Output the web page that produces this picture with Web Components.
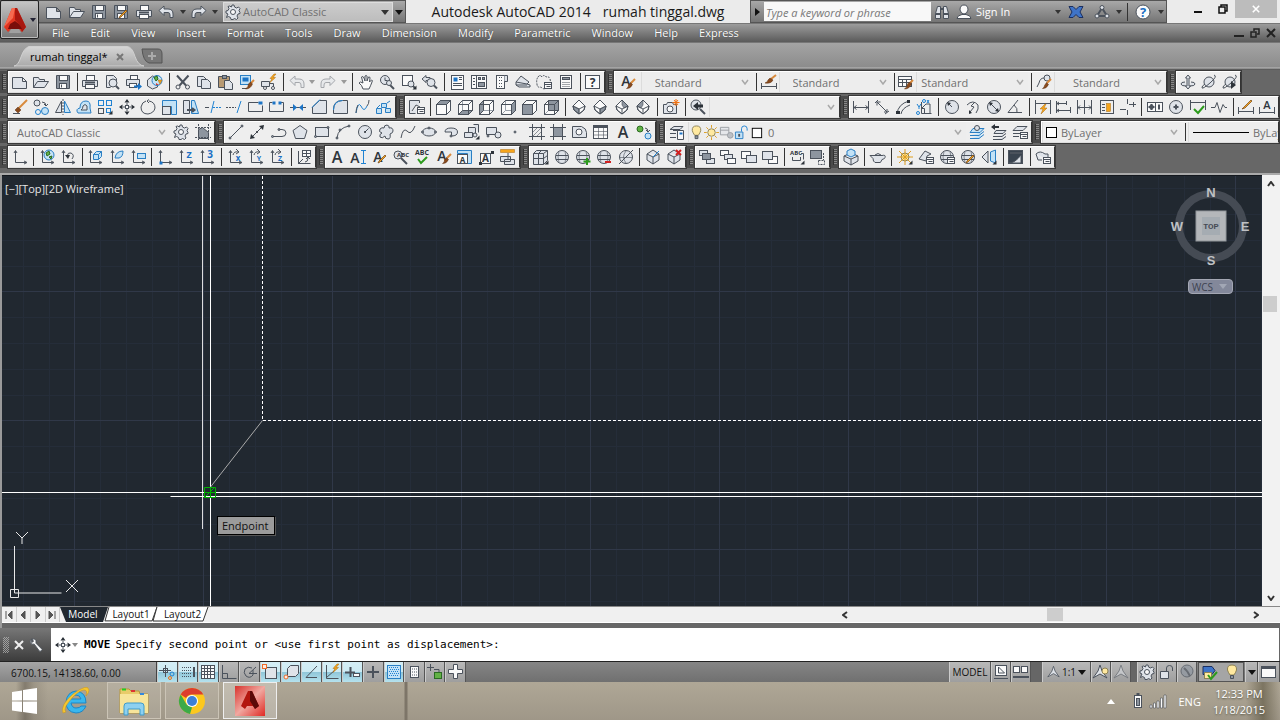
<!DOCTYPE html>
<html lang="en">
<head>
<meta charset="utf-8">
<meta name="viewport" content="width=device-width, initial-scale=1">
<title>Autodesk AutoCAD 2014 - rumah tinggal.dwg</title>
<style>
  html, body { margin: 0; height: 100%; }
  body { font-family: "Open Sans", "Noto Sans", sans-serif; font-size: 11px; overflow: hidden; background: #676767; }
</style>
</head>
<body>
<cad-app></cad-app>
<script>
/* ---------- icon artwork, drawn on a 16 x 16 grid ---------- */
const p = (d, c = '') => `<path class="${c}" d="${d}"/>`;
const ci = (x, y, r, c = '') => `<circle class="${c}" cx="${x}" cy="${y}" r="${r}"/>`;
const t = (s, x, y, size, c = '') => `<text class="t ${c}" x="${x}" y="${y}" font-size="${size}">${s}</text>`;
/* whole coordinates move to the pixel centre so that 1px outlines stay crisp */
const half = v => Number.isInteger(v) ? v + .5 : v;
const re = (x, y, w, h, c = '') => `<rect class="${c}" x="${half(x)}" y="${half(y)}" width="${Math.floor(w)}" height="${Math.floor(h)}"/>`;

const cube = shaded => {
  const faces = {
    back: 'M4.5 1.5h10v10h-10z', left: 'M.5 5.5l4-4v10l-4 4z', bottom: 'M.5 15.5l4-4h10l-4 4z',
    top: 'M.5 5.5l4-4h10l-4 4z', right: 'M10.5 5.5l4-4v10l-4 4z', front: 'M.5 5.5h10v10h-10z'
  };
  const hidden = ['left', 'bottom', 'back', 'right'].includes(shaded);
  return p('M.5 5.5l4-4h10v10l-4 4h-10z', 'w') + (hidden ? p('M.5 15.5l4-4h10M4.5 11.5v-10', 'faint') : '') +
    p(faces[shaded], 'm') + p(faces.top + faces.front + 'M14.5 1.5v10l-4 4');
};
const iso = d => p('M8 1l6 6-1 4-5 4-5-4-1-4z', 'w') + p(d, 'm thin') + p('M8 1l6 6-1 4-5 4-5-4-1-4zM2 7l6 3 6-3M8 10v5');
const lens = (x, y) => ci(x, y, 4, 'f') + p(`M${x + 3} ${y + 3}l3 3`, 'thick');
const ucs = p('M3.5 2v11.5h11M2 4l1.500-2.500L5 4M12 12l3 1.500-3 1.500');
const dim = p('M.5 2v12M15.5 2v12M1 8.5h14M3.5 6.5l-2.500 2 2.500 2M12.500 6.500l2.500 2-2.500 2');
const corner = p('M15.5 11.5v4h-4z', 'k');
const globe = ci(8, 8, 6.5, 'f') + p('M2 6.5h12M2 10.5h12') + p('M5 2.5q-2 5.500 0 11M11 2.5q2 5.500 0 11', 'thin');
const brush = p('M15 5l-4 4', 'brown') + p('M10.5 8.5l2 2q-2 4.500-6 4 2-1 2-3z', 'brownf');
const pencil = p('M14 7l-6 6-2 1 1-2 6-6z', 'pen');
const sheet = p('M.5 3.5h10l4 4v7h-14zM10.5 3.5v4h4', 'f');
const bolt = p('M13 0l-4 4.500h2l-2 4 5.500-5h-2.500l3-3.500z', 'of');
const table = (x, y) => re(x, y, 7, 6, 'w') + p(`M${half(x)} ${half(y) + 2}h7M${half(x) + 2} ${half(y) + 4}h4`);
const stack = (a, b, c) => re(0, 1, 8, 5, a) + re(4, 5, 8, 5, b) + re(7, 9, 8, 5, c);

const ICONS = {
  new: sheet,
  open: p('M.5 13.500v-10h5l1 2h5v2M.5 13.500l4-6h11l-4 6z', 'f'),
  save: p('M1.5 1.5h13v13h-13z', 'm') + re(4, 1, 8, 5, 'w') + re(4, 9, 7, 5, 'w') + p('M6.5 10.5v3'),
  saveas: p('M1.5 1.5h13v13h-13z', 'm') + re(4, 1, 8, 5, 'w') + re(4, 9, 7, 5, 'w') + pencil,
  print: re(4, 1, 8, 5, 'w') + p('M.5 6.5h15v6h-15z', 'f') + re(3, 10, 9, 4, 'w') + p('M3 8.5h10', 'thick'),
  preview: p('M2.5 1.5h7l3 3v3M2.5 1.5v12h4', 'f') + lens(9, 9),
  publish: re(4, 1, 7, 4, 'w') + p('M.5 5.5h13v6h-13z', 'f') + re(3, 9, 7, 4, 'w') + p('M8 11.5h4v-2.500l4 3.500-4 3.500v-2.500h-4z', 'bf'),
  sphere3d: p('M.5 6l5-4 5 2v9l-5 2-5-3z', 'f') + ci(10, 6.5, 5, 'bl') + p('M7 3.5l3-1.500 1 3-2 2z', 'gf') + p('M11 6h4l-2 4z', 'of') + p('M9 9l3 2h-3z', 'rf'),
  cut: p('M2 1.5l9 10M13.5 1.5l-9 10', 'thick') + ci(3, 13, 2) + ci(12.5, 13, 2),
  copy: p('M1.5 2.5h6l3 3v7h-9z', 'f') + p('M5.5 5.5h6l3 3v6h-9z', 'f'),
  paste: p('M.5 2.5h11v11h-11z', 'tan') + re(4, 1, 4, 3, 'm') + p('M6.5 6.5h5l3 3v6h-8z', 'f'),
  match: re(1, 1, 10, 9, 'bl') + re(3, 3, 6, 4, 'bf') + p('M3 14.5h5') + p('M15 6l-3 3', 'brown') + p('M11.5 8l2 2q-2 5-7 5 3-2 3-5z', 'brownf'),
  blockedit: p('M.5 7.5h8v5h-8zM8.5 9.5h4v4', 'f') + ci(4, 14, 1.5, 'w') + ci(12, 14, 1.5, 'w') + bolt,
  undo: p('M1 6.5l5-4.500v3h4q5 0 5 5v3.500h-3v-2.500q0-2.500-2-2.500h-4v3z', 'f'),
  redo: p('M15 6.5l-5-4.500v3h-4q-5 0-5 5v3.500h3v-2.500q0-2.500 2-2.500h4v3z', 'f'),
  pan: p('M5 15q-1-4-4-6 1-2 4 0l-1.500-6q1.500-1.500 2.500 1l1 3v-5q1.500-1 2 0v5l1.500-4q1.500-.5 1.500 1l-.5 4 2-2q1.500 0 .5 2-1.500 4-3 7z', 'w'),
  zoomrt: ci(6, 6, 4.5, 'f') + p('M6 3.5v3h2.500') + p('M10 10l5 5', 'thick') + ci(10, 9, 2.5, 'f'),
  zoomwin: re(1, 1, 10, 10, 'w') + ci(10, 10, 3, 'f') + p('M12 12l2 2', 'thick') + corner,
  zoomprev: p('M0 5l4-3.500v2h4v3h-4v2z', 'f') + lens(9, 8.5),
  props: re(1, 1, 12, 14, 'w') + re(3, 3, 4, 4, 'bf') + p('M9 3.5h3M9 5.5h3M3 9.5h9M3 11.5h9'),
  dcenter: re(0, 1, 15, 13, 'w') + p('M5.5 1v13') + p('M2 4.500h2M2 7.500h2M2 10.500h2', '') + re(7, 3, 2, 2, 'm') + re(11, 3, 2, 2, 'm') + re(7, 8, 6, 4, 'm'),
  palettes: re(3, 1, 8, 13, 'w') + p('M11.5 1.500h3v6h-3', 'f') + p('M6 3.5h4M6 6.5h4M6 9.5h4M6 12.5h4', 'dot'),
  sheetset: p('M1 8l5-6 8 6-2 2zM1 8v3l3 2h11v-2l-3-1M1 11h11', 'f'),
  markup: p('M2 3q2-3 4 0 2-3 4 0 3-1 4 2 1 3-1 5l-2 4q-4 2-6-1-4 1-4-3-1-4 1-7', 'dash') + table(8, 8),
  calc: re(2, 1, 11, 13, 'w') + re(4, 3, 7, 2, 'm') + p('M4.5 8.500h7M4.5 10.5h7M4.5 12.500h7', 'dot'),
  help: re(0, 1, 14, 13, 'w') + t('?', 7.5, 13, 12, 'bold'),
  textstyle: t('A', 6, 12, 14) + brush,
  dimstyle: p('M.5 9v6M15.5 9v6M1 12.5h14') + p('M15 1l-5 4', 'brown') + p('M9 4l3 2q-2 4-8 3 3-1 3-3z', 'brownf'),
  tabstyle: re(0, 2, 13, 10, 'w') + p('M1 5.5h12M1 8.5h12M4.5 5v7M8.5 5v7') + p('M15 6l-3 3', 'brown') + p('M11.5 8l2 2q-2 5-7 5 3-2 3-5z', 'brownf'),
  mlstyle: ci(11, 4, 3, 'f') + p('M8 4q-4 0-5 5l-2 4') + brush,
  orbit: p('M8 1l-2.500 3h1.500v8h-1.500l2.500 3 2.500-3h-1.500v-8h1.500zM5 8q-4 0-4 2 0 2 5 2M11 8q4 0 4 2 0 2-5 2', 'f'),
  orbit2: ci(8, 8, 5, 'f') + p('M13 1q4 1-4 8-7 6-8 5-.5-2 3-4'),
  orbit3: ci(8, 8, 5, 'f') + p('M13 1q4 1-4 8-7 6-8 5-.5-2 3-4') + p('M9 7l5 4-5 4z', 'k'),

  erase: p('M15 1L7 9', 'brown') + p('M6 8l3 3-3 3-3-3z', 'brownf') + p('M1 14.500h7'),
  copyobj: ci(4, 4, 3, 'f') + ci(5, 13, 2.5, 'b') + ci(12, 12, 3.5, 'bl') + p('M9 3q4 0 4 4M11 5l2 2 2-2'),
  mirror: p('M6.500 2v11.500h-6z', 'f') + p('M9.5 2v11.500h6z', 'bl') + p('M8 0v16', 'dash'),
  offset: p('M2 14q-3-4 2-5 0-7 6-7 5 0 4 7l1 5z', 'bl') + p('M5 11q2-1 2-4 2-3 4 0v4z', 'f'),
  array: re(1, 1, 5, 5, 'b') + re(9, 1, 5, 5, 'b') + re(1, 9, 5, 5) + re(9, 9, 4, 4, 'b') + corner,
  move: p('M8 1v14M1 8h14', 'dash') + p('M5.5 3.5L8 0l2.500 3.500zM5.5 12.500L8 16l2.500-3.500zM3.500 5.5L0 8l3.500 2.500zM12.500 5.5L16 8l-3.500 2.500z', 'k') + re(6, 6, 3, 3, 'w'),
  rotate: p('M6 2q-4 1-5 6 0 7 7 7 6-1 7-6 0-6-6-7M9 .5L7 2l2 2'),
  scale: p('M.5 1.5h14v14h-5v-8h-9z', 'bl') + re(0, 7, 8, 8, 'f'),
  stretch: p('M.5 1.5h6v13h-6z', 'f') + p('M8.5 1.5h3l4 13h-7z', 'bl') + p('M4 11h7M9 9l2.500 2-2.500 2', 'thick'),
  trim: p('M0 8.5h4') + p('M9 2L6 14', 'b') + p('M8 8.5h8', 'b dash'),
  extend: p('M0 8.500h5M6 8.500h4', 'dash') + p('M15 2L11 14', 'b'),
  breakpt: p('M.5 3.5h10M.5 3.5v9h14v-6') + re(10, 2, 4, 3, 'bf'),
  break: p('M.5 3.5h3M12 3.5h2.500v9h-14v-9') + re(3, 2, 3, 3, 'bf') + re(9, 2, 3, 3, 'bf'),
  join: p('M0 8.500h16') + p('M3 5l4 3.500-4 3.500zM13 5L9 8.500l4 3.500z', 'bf'),
  chamfer: p('M.5 8v6.500h14v-13h-7z', 'f') + p('M0 8.500l8-8', 'b'),
  fillet: p('M.5 14.500v-4q0-9 9-9h5v13z', 'f') + p('M.5 11q0-9 9-9.500', 'b'),
  blend: p('M1 14q2-12 5-7 3 7 6 0', 'b') + p('M1 14q0-5 2-8M12 7q2-2 2-6'),
  explode: p('M.5 9.500h5v5h-5zM5.500 4.500h5v4h-5zM9.500 9.500h5v4h-5zM1 9l3-3M11 4l3-2', 'bl'),
  viewmgr: p('M10.5 4V1.500h-10v13h6M3 12l4-6 4 2', 'f') + table(8, 8),
  ctop: cube('top'), cbottom: cube('bottom'), cleft: cube('left'), cright: cube('right'), cfront: cube('front'), cback: cube('back'),
  isosw: iso('M2 7l6 3v5l-5-4z'), isose: iso('M14 7l-6 3v5l5-4z'), isone: iso('M8 1l6 6-4 2-2-3z'), isonw: iso('M8 1l-6 6 4 2 2-3z'),
  camera: p('M.5 5.500h3l1-2h5l1 2h3v9h-13z', 'f') + ci(7, 10, 3, 'w') + p('M13 0v7M9.500 3.500h7M11 1l4 5M15 1l-4 5', 'o'),
  zoomback: ci(6, 6, 5, 'f') + p('M10 10l5 5', 'thick') + p('M8 3L3 7l5 4v-2.500h5v-3h-5z', 'k'),

  dimlin: dim,
  dimali: p('M1 4l3-3M11 15l4-3M3 3l10 10M3 6.500V3h3.500M10 13h3v-3'),
  dimarc: p('M2 15q1-10 12-13M6 15q1-6 9-9') + p('M1 12h4v3h-4zM12 1h3v3h-3z', 'k'),
  dimord: p('M5.500 3v11.500h10M5.500 9.500h3v5M6 9l4-4h4v9') + p('M1 5l2 3 2-3M3 8v2M11 1l2 3M13 1l-2 3', 'b') + ci(8, 2, 1.5, 'b') + ci(2, 14, 1.5, 'b'),
  dimrad: ci(8, 8, 6.5, 'f') + p('M8 8L5 5') + p('M3 3l4 1-3 3z', 'k'),
  dimjog: p('M2 6q6-6 11 0 1 4-2 8M5 13l4-5-3-1 3-3') + p('M4 15v-4l3 3z', 'k'),
  dimdia: ci(8, 8, 6.5, 'f') + p('M4 4l8 8') + p('M3 3l4 1-3 3zM13 13l-4-1 3-3z', 'k'),
  dimang: p('M1 13.500h14M1 13.500L11 1M10 14q1-5-3-8'),
  dimquick: p('M.5 1v14M15.5 1v14M1 4.500h14') + p('M10 5l-5 5h3l-2 5 6-6h-3l2-4z', 'of'),
  dimbase: p('M.5 2v12M10.5 2v4M14.500 8v6M1 4.500h9M1 11.500h13M3 3L1 4.500l2 1.500M3 10l-2 1.500L3 13'),
  dimcont: p('M.5 1v14M7.500 1v14M14.500 1v14M1 8.500h13M3 6.500l-2 2 2 2M12 6.500l2 2-2 2'),
  dimspace: p('M1 1.500h14M1 14.500h14M1.500 2v12M14.500 2v12M3 5.500h3M3 8.500h3M3 11.500h3') + re(7, 4, 4, 8, 'of'),
  dimbreak: p('M7.500 0v5M7.500 11v5M0 10.500h6M9 5.500h7M13.500 3v5'),
  tol: re(0, 3, 15, 9, 'w') + p('M8.500 3v9') + ci(4.5, 8, 2) + p('M1.5 8h6M4.5 5v6M12 5.5v5', 'thick'),
  center: ci(8, 8, 6.5, 'f') + p('M8 5.500v5M5.500 8h5', 'thick'),
  inspect: p('M.5 1v10M15.5 1v10M1 3.500h14') + p('M4 10l4 4 6-7', 'gthick'),
  jogline: p('M0 8.500h4l2-5 3 10 3-8 2 3h2'),
  dimedit: p('M.5 8v7M15.5 8v7M1 12.500h14') + p('M13 1L6 8l-2 2 3-1 7-7z', 'pen'),
  dimtedit: t('A', 8, 10, 11) + p('M.5 8v7M15.5 8v7M1 13.500h14'),

  gear: p('M7 1h2l.5 2 2 1 2-1 1.500 1.500-1 2 1 2v1l-2 .5-1 2 1 2-1.500 1.500-2-1-1.500 1h-2l-.5-2-2-1-2 1L2 12l1-2-2-1v-2l2-.5 1-2-1-2L4.500 2l2 1z', 'f') + ci(8, 8, 2.5, 'w'),
  wspace: p('M3.500 14.500V5.500l4-2 6 5v6z', 'm') + p('M0 3.500h16M3.500 0v16M0 13.500h16M13.500 0v16', 'dash'),
  line: p('M2 14L14 2') + ci(2, 14, 1, 'm') + ci(14, 2, 1, 'm'),
  xline: p('M2 14L14 2') + p('M1 15l1-5 4 4zM15 1l-1 5-4-4z', 'k') + ci(8, 8, 1, 'k'),
  pline: p('M1 12.500h7M8 5.500h3q4 0 4 3.500 0 3.500-4 3.500H8') + ci(8, 5.5, 1, 'm') + ci(1.5, 12.5, 1, 'm'),
  polygon: p('M8 1.5l7 5-2.500 8h-9L1 6.5z', 'f'),
  rect: re(1, 3, 13, 9, 'f') + ci(14, 3.5, 1, 'm') + ci(1.5, 12.5, 1, 'm'),
  arc: p('M2 14q1-10 12-12') + ci(2, 14, 1, 'm') + ci(5, 6, 1, 'm') + ci(14, 2, 1, 'm'),
  circle: ci(8, 8, 6.5, 'f') + p('M8 8l3.500-3.500') + ci(8, 8, 1, 'k'),
  revcloud: p('M6 4q0-3 3-3 3 1 2 3 4-1 4 3 0 2-3 3 1 5-2 5-3 0-3-3-3 3-5 1-1-3 2-4-4-1-2-4 2-2 4-1z', 'f'),
  spline: p('M1 14q2-11 6-7 4 5 8-5'),
  ellipse: '<ellipse class="f" cx="8" cy="8" rx="6.5" ry="4"/>' + ci(1.5, 8, 1, 'm') + ci(14.5, 8, 1, 'm') + ci(8, 4, 1, 'm'),
  earc: p('M2 8q0-4 6-4 6.500 0 6.500 4 0 4-6 4V8z', 'f') + ci(8, 12, 1, 'm'),
  insert: re(4, 3, 7, 6, 'f') + p('M9.500 .5h5v8M.5 8.500h8v5h-8z', 'f') + ci(11, 11, 2, 'f') + corner,
  block: p('M.5 3.500h10v7h-10z', 'f') + ci(12, 11, 3, 'f') + ci(2, 12, 1, 'm'),
  point: ci(8, 8, 1, 'm'),
  hatch: p('M3.500 0v16M12.500 0v16M0 3.500h16M0 12.500h16') + p('M4 8l4-4M4 12l8-8M8 12l4-4', 'thin'),
  gradient: re(3, 3, 9, 9, 'm') + p('M3.500 0v16M12.500 0v16M0 3.500h16M0 12.500h16'),
  region: p('M.5 2.5h9q5 2 5 6v5h-14z', 'f') + ci(7, 8, 3, 'w'),
  table: re(0, 1, 14, 13, 'w') + p('M1 3h13', 'thick') + p('M1 7.500h13M1 11h13', 'thin') + p('M5.5 4v10M10.5 4v10', 'thin'),
  mtext: t('A', 8, 14, 16),
  addsel: ci(4, 5, 3, 'gf') + ci(12, 12, 3, 'bl') + p('M9 4q3 0 3 4M10 6l2 2 2-2'),
  layerp: p('M5 2.500h9l-3 3H1zM1 9.500h6M1 13.500h6M4 6.500h6', 'f') + p('M8.500 6.500h6v9h-6z', 'w') + re(10, 8, 3, 2, 'bf'),
  bulb: p('M8 1q-5 0-4.500 5 .5 2 2.500 5h4q2-3 2.500-5 .5-5-4.500-5z', 'yf') + p('M6.500 11.500h3v3h-3z', 'm'),
  sun: ci(8, 8, 4, 'yf') + p('M8 0v3M8 13v3M0 8h3M13 8h3M2.5 2.5l2 2M11.5 11.5l2 2M13.5 2.5l-2 2M4.5 11.5l-2 2', 'y'),
  vpfreeze: p('M1.500 2.500h9v8h-9zM1.500 5.500h9', 'f') + ci(12, 11, 3, 'm'),
  lock: p('M1.500 7.500h8v7h-8z', 'bl') + p('M8 7V4q0-3 3-3t3 3v2', 'b') + p('M5.5 9.500v3', 'thick'),
  swatch: re(3, 3, 10, 10, 'blackbox'),
  layiso: p('M4 4.500h11l-4 4H1zM1 11.500h9l5-4M1 14.500h9l5-4', 'bl') + ci(8, 4, 2.5, 'f'),
  layprev: p('M5 6.500h10l-3 3H3zM2 12.500h9l4-3M2 15.500h9l4-3', 'f') + p('M0 3l4-3v2h4v2h-4v2z', 'k'),
  laystate: p('M5 2.500h10l-4 4H1zM1 9.500h7M1 12.500h6', 'f') + table(8, 8),
  ucs,
  ucsworld: ucs + ci(10, 6, 5, 'bl') + p('M7 4l3-2 1 3-3 2zM10 8l3-1-1 3z', 'gf'),
  ucsprev: ucs + p('M7 7q1-4 4-3 4 2 1 6') + p('M5 6h5l-2 4z', 'k'),
  ucsface: ucs + p('M6.500 5.500h5v5h-5zM6.500 5.500l3-3h5v5l-3 3M11.500 5.500l3-3', 'bl'),
  ucsobj: ucs + p('M6 9q1-7 8-7 0 6-4 7z', 'bl'),
  ucsview: ucs + re(7, 4, 8, 5, 'bl'),
  ucsorig: ucs + re(2, 12, 3, 3, 'bf'),
  ucsz: ucs + t('Z', 11, 9, 9, 'bold blue'),
  ucs3: ucs + t('3', 11, 9, 10, 'bold blue'),
  ucsrx: ucs + p('M6 6q1-4 5-3M9 0l3 3-3 2') + t('x', 11, 12, 8, 'bold blue'),
  ucsry: ucs + p('M6 6q1-4 5-3M9 0l3 3-3 2') + t('Y', 11, 12, 7, 'bold blue'),
  ucsrz: ucs + p('M6 6q1-4 5-3M9 0l3 3-3 2') + t('Z', 11, 12, 7, 'bold blue'),
  ucsapply: p('M2.500 2v12.500h12M2 15l5-5') + re(6, 1, 8, 6, 'w') + p('M6 4.500h8M10.500 1v6') + p('M9 13q3 0 3-4M10 10l2-2 2 2'),
  stext: t('A', 5, 14, 14) + p('M13.500 1v14M11 1.500h5M11 14.500h5', 'b'),
  tedit: t('A', 6, 13, 14) + pencil,
  find: ci(5, 6, 4, 'f') + t('ABC', 10, 8, 6, 'bold') + p('M8 9l6 6', 'thick'),
  spell: t('ABC', 8, 6, 7, 'bold') + p('M4 10l3 4 6-6', 'gthick'),
  tscale: p('M.5 1.500h14v13h-4v-10h-10z', 'bl') + re(0, 5, 10, 9, 'w') + t('A', 5.5, 13.5, 8, 'bold'),
  tjust: re(1, 4, 10, 10, 'w') + t('A', 6.5, 13, 10, 'bold') + p('M0 13h3v3h-3zM12 2h3v3h-3z', 'k'),
  tspace: p('M.5 .5h14v3h-14z', 'of') + p('M.5 7.500h10v5h-10zM4.500 10.500h10v5h-10z', 'f') + p('M8 4v6'),
  mesh: p('M.5 4.500l3-3h11v10l-4 4h-10z', 'f') + p('M.5 4.500h10v11M10.500 4.500l4-3M5.500 5v10M.5 9.500h10l4-3M6 4l3-3') + corner,
  globe, globeadd: globe + p('M12 9v7M8.5 12.5h7', 'gthick'), globesub: globe + p('M9 13h6', 'rthick'), globeno: ci(8, 8, 6.5, 'f') + p('M2 8.500h12M8 2q-5 6 0 12', 'thin') + p('M1 15L15 1'),
  facesplit: p('M2 5l6-4 6 4v6l-6 4-6-4zM2 5l6 3 6-3M8 8v7', 'f') + p('M14 2L8 8', 'b'),
  facedel: p('M2 5l6-4 6 4v6l-6 4-6-4zM2 5l6 3 6-3M8 8v7', 'f') + p('M10 1l5 5M15 1l-5 5', 'rthick'),
  front: re(0, 1, 8, 5, 'f') + re(7, 9, 8, 5, 'f') + re(3, 4, 8, 6, 'm'), back: stack('w', 'f', 'w'), above: re(0, 2, 9, 7, 'w') + re(5, 6, 10, 7, 'f'), under: re(6, 7, 9, 7, 'w') + re(0, 2, 10, 8, 'f'),
  textfront: t('ABC', 7, 6, 6, 'bold') + p('M3.500 8v3.500h8V8M12 4.500h2.500v6') + corner,
  hatchback: re(0, 1, 11, 8, 'm') + p('M8.500 11.500h6v4h-6zM13.500 4v7', 'dash'),
  box3d: p('M1 7l7-3 7 3v5l-7 4-7-4zM1 7l7 3 7-3M8 10v6', 'f') + p('M4 5V2l4-2 4 2v4l-4 2-4-2z', 'bl'),
  teapot: p('M4 6.500h8q4-1 3 2-1 2-3 2-1 3-2 3h-5q-2-1-2-4l-3-3h2zM5 6q3-3 6 0', 'f'),
  light: ci(8, 8, 4, 'yf') + p('M8 0v16M0 8h16M2 2l12 12M14 2L2 14', 'y') + corner,
  lights: p('M1 10l6-8 6 3-4 2-1 5z', 'f') + table(8, 8),
  mats: globe + table(8, 8), matedit: globe + pencil,
  mapping: p('M1 8l6-6v12z', 'f') + p('M9.500 3l5-2v13l-5-2z', 'bl') + corner,
  render: re(0, 1, 14, 13, 'dark') + re(2, 3, 11, 1, 'w') + p('M1 14q6 0 12-8v8z', 'f'),
  rendset: p('M1 5q4-4 9 0h3v5h-2M1 5l2 6h4', 'f') + table(8, 8),

  binoc: p('M1.500 14.500v-5l2-7h3v12zM9.500 14.500v-12h3l2 7v5z', 'f') + p('M1.500 10h5M9.500 10h5M6 5h4', 'thick'),
  user: p('M8 1q4 0 4 5-1 4-4 4T4 6q0-5 4-5z', 'w') + p('M1 14.500q0-3 5-4h4q5 1 5 4z', 'w'),
  exch: p('M1 2.500h4l3 3 3-3h4l-3 5.500 3 5.500h-4l-3-3-3 3H1L4 8z', 'exch'),
  tri: p('M8 4L3 12h10z', 'thick') + ci(8, 3.5, 2, 'f') + ci(3, 12, 2, 'f') + ci(13, 12, 2, 'f'),
  info: ci(8, 8, 7, 'w') + t('?', 8, 12.5, 13, 'bold blue'),
  wrench: p('M3 1q-3 3 0 6h3l6 8q2 1 3-2L8 6V3Q6 0 4 1l1 3-2 1z', 'w'),

  s_infer: p('M6.500 1v12M0 6.500h12') + re(4, 4, 4, 4) + ci(13, 10, 2, 'b') + ci(11, 14, 1.5, 'o'),
  s_snap: p('M2 3.500h9M2 6.500h9M2 9.500h9M2 12.500h9', 'dot') + p('M14 3v10', 'thick'),
  s_grid: re(1, 1, 13, 13, 'w') + p('M4.500 1v14M7.500 1v14M10.500 1v14M1 4.500h14M1 7.500h14M1 10.500h14'),
  s_ortho: p('M1.500 1v13.500h14M2 9.500h4.500v5'),
  s_polar: p('M14 3L7 9.500h8M10 4q-4-2-7 1-2 4 1 7 4 3 7-1v-5'),
  s_osnap: re(3, 3, 11, 11, 'f') + re(0, 0, 4, 4, 'ow'),
  s_3d: p('M4.500 4.500l3-3h8v8l-3 3h-8z', 'f') + ci(3, 13, 2, 'ow'),
  s_track: p('M14 2L3 13.500h11'),
  s_ducs: p('M2.500 1v13.500h12M2 14L11 6') + bolt,
  s_dyn: p('M5.500 3v10M0 8.500h10', 'thick') + re(8, 9, 6, 3, 'w'),
  s_lwt: p('M8 2v12M2 8h12', 'thick'),
  s_tpy: re(1, 1, 13, 13, 'bl') + p('M3 3.500h10M3 7.500h10M3 11.500h10M4 5.500h9M4 9.500h9', 'b dot'),
  s_qp: re(4, 2, 8, 11, 'w') + p('M6 5h5M6 8h5M6 11h5', 'dot'),
  s_sc: p('M3.500 0v7M0 3.500h7M7 5.500h5v3') + re(7, 8, 7, 6, 'gf'),
  s_am: p('M5.500 .5h4v5h5v4h-5v5h-4v-5h-5v-4h5z', 'w'),
  layoutm: re(2, 1, 11, 10, 'w') + p('M5.500 3v6h6zM1 14.5h14'),
  layouts: re(0, 2, 6, 6, 'w') + re(8, 2, 6, 6, 'w') + p('M0 13h16', 'thick'),
  annot: p('M8 1l2 6 5 7-7-4-7 4 5-7z', 'f'),
  annovis: p('M7 1l2 6 5 7-7-4-7 4 5-7z', 'f') + ci(12, 7, 3, 'yf'),
  unlock: p('M1.500 7.500h8v7h-8z', 'f') + p('M7.500 8V4q0-2.500 3-2.500t3 2.500v3'),
  hardware: ci(8, 7, 6, 'm') + p('M8 7l3 5M5 4l3 3', 'thick'),
  tray1: p('M1 2.500h9l3 4-3 4h-9z', 'exch') + re(2, 8, 7, 6, 'yf') + p('M6 11l3 4 6-7', 'gthick'),
  clean: re(0, 2, 14, 11, 'w') + p('M1 4h14', 'thick'),
  battery: re(4, 2, 7, 12, 'w') + re(6, 5, 3, 7, 'm') + p('M6.500 1h3', 'thick'),
  signal: p('M0 15v-3h2v3zM3.5 15v-5h2v5zM7 15V8h2v7zM10.5 15V5h2v10zM14 15V2h2v13z', 'w thin')
};

/* ---------- base class ---------- */
class Part extends HTMLElement {
  constructor() { super(); this.attachShadow({ mode: 'open' }); }
  connectedCallback() {
    this.shadowRoot.innerHTML = `<style>*{box-sizing:border-box}button{font:inherit;color:inherit;border:0;background:none;padding:0;margin:0}${this.css()}</style>${this.html()}`;
  }
  css() { return ':host{display:block}'; }
  html() { return '<slot></slot>'; }
}
const define = (name, css, html) => customElements.define(name, class extends Part {
  css() { return css; }
  html() { return typeof html === 'function' ? html(this) : html; }
});

define('app-icon', `
  :host { display: block; flex: none; width: 16px; height: 16px; }
  svg { display: block; width: 100%; height: 100%; overflow: visible; fill: none; stroke: #4b525c; stroke-width: 1; }
  .f { fill: #dfe3e9; } .w { fill: #fafafa; } .m { fill: #8d959f; } .k { fill: #2c3239; stroke: none; } .dark { fill: #39434f; }
  .b { stroke: #1f82d2; } .bl { fill: #c3e2f6; stroke: #2a7fc4; } .bf { fill: #1c74c6; stroke: none; } .faint { stroke: #9aa1aa; }
  .o { stroke: #f07010; } .of { fill: #f6a51c; stroke: #a86a10; stroke-width: .5; } .ow { fill: #ffe9dc; stroke: #ef6a2a; }
  .yf { fill: #ffe9a0; stroke: #8d8256; } .y { stroke: #dd9d1e; } .pen { fill: #f5a623; stroke: #70400e; stroke-width: .7; }
  .gf { fill: #62b245; stroke: #2b6b23; } .rf { fill: #dd3a2a; stroke: none; } .tan { fill: #b79a74; }
  .gthick { stroke: #2c9b1c; stroke-width: 2; } .rthick { stroke: #d32020; stroke-width: 2; }
  .thick { stroke-width: 2; } .thin { stroke-width: .6; } .dash { stroke-dasharray: 2 1; } .dot { stroke-dasharray: 1 1; }
  .brown { stroke: #d88a3c; stroke-width: 2; } .brownf { fill: #8a4a1c; stroke: #5c3012; stroke-width: .5; }
  .exch { fill: #3f74c8; stroke: #1b2f60; } .blackbox { fill: #fff; stroke: #000; }
  .t { fill: #2f353c; stroke: none; font-family: "Open Sans", sans-serif; font-weight: 600; text-anchor: middle; }
  .bold { font-weight: 700; } .blue { fill: #1a6fc4; }`,
  el => `<svg viewBox="0 0 16 16" aria-hidden="true">${ICONS[el.getAttribute('name')] || ''}</svg>`);

/* A run of icon buttons. "|" is a separator, "v" a small menu arrow, "!" marks a disabled tool. */
define('tool-set', `
  :host { display: flex; flex: 1; align-items: center; min-width: 0; height: 100%; }
  button { display: flex; flex: 1 1 0; min-width: 0; height: 100%; align-items: center; justify-content: center; }
  .off { opacity: .45; }
  .menu { flex: 0 0 10px; }
  .menu i { border: 3px solid transparent; border-top: 4px solid #333; border-bottom: 0; }
  .sep { flex: 0 0 1px; height: 18px; margin: 0 2px 0 3px; background: #333; }`,
  el => el.getAttribute('tools').trim().split(/\s+/).map(n => {
    if (n === '|') return '<span class="sep"></span>';
    if (n === 'v' || n === '!v') return `<button type="button" class="menu ${n[0] === '!' ? 'off' : ''}" aria-label="More"><i></i></button>`;
    const off = n[0] === '!'; if (off) n = n.slice(1);
    return `<button type="button" class="${off ? 'off' : ''}" aria-label="${n}"><app-icon name="${n}"></app-icon></button>`;
  }).join(''));

define('tool-bar', `
  :host { display: flex; flex: 0 0 var(--w, auto); min-width: 0; height: 22px; }
  :host([fill]) { flex: 1 1 0; }
  .grip { flex: 0 0 8px; background: #4b4b4b; padding: 3px 2px; }
  .grip::before { content: ""; display: block; height: 100%;
    background: repeating-linear-gradient(#888 0 1px, transparent 1px 2px); border-left: 1px solid #333; }
  .body { display: flex; flex: 1; min-width: 0; align-items: center; overflow: hidden; background: #eeeeee;
    border: 1px solid #fff; border-right-color: #333; border-bottom-color: #ddd; margin-right: 1px; outline: 1px solid #3a3a3a; outline-offset: 0; }`,
  '<span class="grip"></span><div class="body"><slot></slot></div>');

define('combo-box', `
  :host { position: relative; display: flex; flex: 0 0 var(--w, auto); min-width: 0; height: 100%; align-items: center; gap: var(--gap, 2px); background: #ededed; border-left: 1px solid #dcdcdc; }
  :host([fill]) { flex: 1 1 0; }
  select { flex: 1; min-width: 0; height: 100%; border: 0; margin: 0; appearance: none; background: none; font: inherit;
    color: #707070; padding: 0 16px 0 var(--pad, 4px); outline: 0; }
  svg { position: absolute; right: 4px; top: calc(50% - 3px); width: 8px; height: 6px; fill: none; stroke: #a9a9a9; stroke-width: 1.5; pointer-events: none; }
  :host([noarrow]) svg { display: none; }
  :host([noarrow]) select { padding-right: 0; }`,
  el => `<slot></slot><select aria-label="${el.getAttribute('label')}"><option>${el.getAttribute('value') || ''}</option></select>
  <svg viewBox="0 0 8 6"><path d="M1 1l3 4 3-4"/></svg>`);

/* ---------- window header ---------- */
define('title-bar', `
  :host { display: flex; height: 23px; background: #ebebeb; color: #1a1a1a; }
  .quick, .info { display: flex; align-items: center; background: linear-gradient(#a8a8a8, #757575); border-top: 1px solid #555; border-bottom: 1px solid #555; }
  .quick { flex: 0 0 406px; padding-left: 43px; border-right: 1px solid #555; }
  .quick tool-set { flex: 0 0 177px; }
  .quick combo-box { flex: 0 0 170px; height: 20px; margin-left: 3px; padding-left: 1px; background: linear-gradient(#ccc, #bdbdbd); border: 1px solid #ddd; }
  .drop { border: 4px solid transparent; border-top: 5px solid #333; border-bottom: 0; position: absolute; right: 3px; top: 7px; pointer-events: none; }
  .pull { flex: 1; height: 20px; font-size: 8px; }
  .pull i { display: inline-block; border: 4px solid transparent; border-top: 5px solid #111; border-bottom: 0; }
  h1 { flex: 1; margin: 0; display: flex; justify-content: center; gap: 12px; align-items: center; font-size: 14px; font-weight: 400; line-height: 22px; white-space: nowrap; }
  .info { flex: 0 0 417px; color: #fff; border-left: 1px solid #555; border-right: 1px solid #555; }
  .run { width: 13px; height: 20px; }
  .run i { display: inline-block; border: 4px solid transparent; border-left: 5px solid #111; border-right: 0; }
  input { width: 167px; height: 19px; border: 0; border-radius: 0; padding: 2px 2px 0; font: italic 11px "Open Sans", sans-serif; background: #f8f8f8; }
  input::placeholder { color: #777; opacity: 1; }
  .info .one { flex: 0 0 44px; }
  .sign { width: 78px; height: 20px; padding-left: 1px; text-align: left; font-size: 11px; }
  .win { flex: 0 0 113px; display: flex; padding: 0 3px 0 18px; }
  .win button { flex: 1; height: 18px; display: flex; align-items: center; justify-content: center; }
  .win .x { flex: 0 0 42px; background: #bcbcbc; }
  .win svg { width: 10px; height: 10px; fill: none; stroke: #111; stroke-width: 1.5; }
  .win .x svg { stroke: #fff; width: 8px; }`, `
  <div class="quick"><tool-set tools="new open save saveas print undo v redo v"></tool-set>
    <combo-box label="Workspace" value="AutoCAD Classic" noarrow style="--pad:0"><app-icon name="gear"></app-icon><i class="drop"></i></combo-box>
    <button class="pull" type="button" aria-label="Customize"><i></i></button></div>
  <h1><span>Autodesk AutoCAD 2014</span><span>rumah tinggal.dwg</span></h1>
  <div class="info"><button class="run" type="button" aria-label="Collapse search"><i></i></button>
    <input type="text" aria-label="Search" placeholder="Type a keyword or phrase">
    <tool-set class="one" tools="binoc user"></tool-set><button class="sign" type="button">Sign In</button>
    <tool-set tools="v exch tri v | info v"></tool-set></div>
  <div class="win"><button type="button" aria-label="Minimize"><svg viewBox="0 0 10 10"><path stroke-width="2" d="M1 8h8"/></svg></button>
    <button type="button" aria-label="Restore"><svg viewBox="0 0 10 10"><path d="M1 3h6v6H1zM3 3V1h6v6H7"/></svg></button>
    <button type="button" class="x" aria-label="Close"><svg viewBox="0 0 10 10"><path stroke-width="2" d="M1 1l8 8M9 1L1 9"/></svg></button></div>`);

define('menu-bar', `
  :host { display: flex; height: 19px; justify-content: space-between; background: linear-gradient(#9c9c9c, #5a5a5a); color: #fff; padding-left: 52px; border-top: 1px solid #777; }
  nav { display: flex; flex: 0 1 687px; justify-content: space-between; }
  nav button { height: 18px; line-height: 18px; text-shadow: 0 0 1px #333; }
  .doc { display: flex; gap: 6px; align-items: center; padding-right: 4px; }
  .doc svg { display: block; width: 10px; height: 10px; fill: none; stroke: #222; stroke-width: 2; }`,
  `<nav>${'File Edit View Insert Format Tools Draw Dimension Modify Parametric Window Help Express'.split(' ').map(m => `<button type="button">${m}</button>`).join('')}</nav>
  <div class="doc"><button type="button" aria-label="Minimize drawing"><svg viewBox="0 0 10 10"><path d="M0 8h10"/></svg></button>
  <button type="button" aria-label="Restore drawing"><svg viewBox="0 0 10 10"><path stroke-width="1.5" d="M1 4h5v5H1zM4 3V1h5v5H7"/></svg></button>
  <button type="button" aria-label="Close drawing"><svg viewBox="0 0 10 10"><path d="M1 1l8 8M9 1L1 9"/></svg></button></div>`);

define('app-button', `
  :host { position: absolute; left: 0; top: 0; width: 39px; height: 39px; }
  button { width: 100%; height: 100%; border: 1px solid #222; border-radius: 2px; background: linear-gradient(#c6c6c6, #777); box-shadow: inset 0 0 0 1px #bbb; display: flex; align-items: center; padding: 0 2px; gap: 3px; }
  svg { width: 24px; height: 26px; }
  i { border: 3px solid transparent; border-top: 4px solid #223; border-bottom: 0; }`,
  `<button type="button" aria-label="Application menu"><svg viewBox="0 0 24 26"><path fill="#e0341f" d="M9 1h5l9 19-4 5-3-3H8l-3 3-4-5z"/><path fill="#a81810" d="M12 1h2l9 19-4 5-3-8-4-4z"/><path fill="#7a0d0a" d="M7 17l5-3 4 3 3 5H5z"/><path fill="#f66a50" d="M9 1h3l-2 10-9 9z"/><path fill="#a0a0a0" d="M8 22h8l2 4H6z"/></svg><i></i></button>`);

define('doc-tabs', `
  :host { display: flex; height: 28px; align-items: flex-start; background: linear-gradient(#a4a4a4, #8c8c8c 24px, #bbb 25px, #666 26px, #555 27px); border-top: 1px solid #777; padding: 3px 0 0 14px; }
  .tab { position: relative; width: 130px; height: 21px; display: flex; align-items: center; padding-left: 16px; color: #000; }
  .tab svg.bg { position: absolute; inset: 0; width: 130px; height: 21px; }
  .tab span { position: relative; width: 86px; }
  .tab button { position: relative; height: 16px; display: flex; align-items: center; }
  .tab button svg { display: block; width: 8px; height: 8px; stroke: #777; stroke-width: 2; }
  .plus { margin: 2px 0 0 -3px; height: 16px; }
  .plus svg { display: block; width: 22px; height: 16px; }`, `
  <div class="tab"><svg class="bg" viewBox="0 0 130 21"><defs><linearGradient id="g" x2="0" y2="1"><stop stop-color="#d6d6d6"/><stop offset="1" stop-color="#aaa"/></linearGradient></defs><path fill="url(#g)" stroke="#d0d0d0" d="M0 20q4 0 7-9t8-10.500h98q5 0 8 10 3 9 9 9.500z"/></svg>
  <span>rumah tinggal*</span><button type="button" aria-label="Close tab"><svg viewBox="0 0 8 8"><path d="M1 1l6 6M7 1L1 7"/></svg></button></div>
  <button class="plus" type="button" aria-label="New tab"><svg viewBox="0 0 22 16"><path fill="#777" stroke="#555" d="M1 1h16q4 0 4 5v9H8Q2 13 1 1z"/><path stroke="#aaa" stroke-width="2" d="M11 4v8M7 8h8"/></svg></button>`);

/* ---------- toolbars ---------- */
define('tool-rows', `
  :host { display: grid; gap: 3px; padding: 1px 0 5px; background: #676767; border-bottom: 2px solid #aaa; overflow: hidden; }
  .row { display: flex; min-width: 0; overflow: hidden; padding: 1px 0; margin: -1px 0; }
  .row:first-child { margin-top: 0; }
  tool-set.s { flex: 0 0 22px; } tool-set.t { flex: 0 0 44px; } tool-set.u { flex: 0 0 65px; } tool-set.bar { flex: 0 0 6px; }
  .layer { --gap: 0px; } .layer app-icon { width: 15px; height: 15px; }
  .ln { width: 56px; height: 1px; background: #000; margin-left: 4px; }`, `
  <div class="row">
    <tool-bar style="--w:606px"><tool-set tools="new open save | print preview publish sphere3d | cut copy paste match blockedit | !undo !v !redo !v | pan zoomrt zoomwin zoomprev | props dcenter palettes sheetset markup calc | help"></tool-set></tool-bar>
    <tool-bar style="--w:562px"><tool-set tools="textstyle"></tool-set><combo-box label="Text style" value="Standard" style="--w:112px;--pad:13px"></combo-box>
      <tool-set tools="| dimstyle"></tool-set><combo-box label="Dimension style" value="Standard" style="--w:112px;--pad:13px"></combo-box>
      <tool-set tools="| tabstyle"></tool-set><combo-box label="Table style" value="Standard" style="--w:112px"></combo-box>
      <tool-set tools="| mlstyle"></tool-set><combo-box label="Multileader style" value="Standard" style="--w:112px;--pad:18px"></combo-box></tool-bar>
    <tool-bar style="--w:74px"><tool-set tools="orbit orbit2 orbit3"></tool-set></tool-bar>
  </div>
  <div class="row">
    <tool-bar style="--w:397px"><tool-set tools="erase copyobj mirror offset array move rotate scale stretch trim extend breakpt break join chamfer fillet blend explode"></tool-set></tool-bar>
    <tool-bar style="--w:444px"><tool-set tools="viewmgr | ctop cbottom cleft cright cfront cback | isosw isose isone isonw | camera | zoomback"></tool-set><combo-box label="View" style="--w:130px"></combo-box></tool-bar>
    <tool-bar fill><tool-set tools="dimlin dimali dimarc dimord | dimrad dimjog dimdia dimang | dimquick dimbase dimcont dimspace dimbreak | tol center inspect jogline | dimedit dimtedit"></tool-set></tool-bar>
  </div>
  <div class="row">
    <tool-bar style="--w:216px"><combo-box fill label="Workspaces" value="AutoCAD Classic" style="--pad:7px"></combo-box><tool-set class="t" tools="gear wspace"></tool-set></tool-bar>
    <tool-bar style="--w:441px"><tool-set tools="line xline pline polygon rect arc circle revcloud spline ellipse earc insert block point hatch gradient region table mtext addsel"></tool-set></tool-bar>
    <tool-bar style="--w:376px"><tool-set class="s" tools="layerp"></tool-set>
      <combo-box class="layer" fill label="Layer" value="0"><app-icon name="bulb"></app-icon><app-icon name="sun"></app-icon><app-icon name="vpfreeze" style="opacity:.5"></app-icon><app-icon name="lock"></app-icon><app-icon name="swatch"></app-icon></combo-box>
      <tool-set class="u" tools="layiso layprev laystate"></tool-set></tool-bar>
    <tool-bar fill><combo-box label="Color" value="ByLayer" style="--w:140px;--pad:0"><app-icon name="swatch"></app-icon></combo-box>
      <tool-set class="bar" tools="|"></tool-set><combo-box fill noarrow label="Linetype" value="ByLayer" style="--pad:2px"><span class="ln"></span></combo-box></tool-bar>
  </div>
  <div class="row">
    <tool-bar style="--w:317px"><tool-set tools="ucs | ucsworld ucsprev | ucsface ucsobj ucsview | ucsorig ucsz ucs3 | ucsrx ucsry ucsrz | ucsapply"></tool-set></tool-bar>
    <tool-bar style="--w:204px"><tool-set tools="mtext stext tedit find spell textstyle tscale tjust tspace"></tool-set></tool-bar>
    <tool-bar style="--w:166px"><tool-set tools="mesh globe globeadd globesub globeno | facesplit facedel"></tool-set></tool-bar>
    <tool-bar style="--w:144px"><tool-set tools="front back above under | textfront hatchback"></tool-set></tool-bar>
    <tool-bar style="--w:225px"><tool-set tools="box3d | teapot | light lights mats matedit mapping | render | rendset"></tool-set></tool-bar>
  </div>`);

/* ---------- drawing ---------- */
define('view-cube', `
  :host { position: absolute; right: 12px; top: 6px; width: 80px; height: 116px; }
  svg { display: block; width: 80px; height: 90px; font-family: "Liberation Sans", sans-serif; font-weight: 700; text-anchor: middle; fill: #bfc1c4; font-size: 13px; }
  button { display: flex; align-items: center; justify-content: space-between; width: 45px; height: 15px; margin: 7px 0 0 18px; padding: 0 5px 0 3px; border: 1px solid #a4a7b3; border-radius: 4px; background: #83889a; color: #3d4250; font-size: 10px; }
  i { border: 4px solid transparent; border-top: 5px solid #a2a7b5; border-bottom: 0; }`, `
  <svg viewBox="0 0 80 90"><circle cx="41" cy="44" r="32" fill="none" stroke="#454b54" stroke-width="8"/>
  <rect x="26" y="29" width="30" height="30" fill="#b4b7ba" stroke="#93979b"/><rect x="32" y="35" width="18" height="18" fill="#a5acb2"/>
  <text x="41" y="47" font-size="8" font-family="Roboto, sans-serif" fill="#454b55">TOP</text><text x="41" y="15">N</text><text x="41" y="83">S</text><text x="7" y="49">W</text><text x="75" y="49">E</text></svg>
  <button type="button"><span>WCS</span><i></i></button>`);

define('drawing-area', `
  :host { display: flex; flex: 1; min-height: 0; border-left: 2px solid #9a9a9a; background: #f0f0f0; }
  .view { position: relative; flex: 1; min-width: 0; overflow: hidden; background: #212830; color: #e6e6e6; border-top: 1px solid #14181e; }
  .plan { display: block; width: 100%; height: 100%; }
  .label { position: absolute; left: 3px; top: 5px; line-height: 15px; }
  .tip { position: absolute; left: 215px; top: 340px; line-height: 17px; height: 19px; padding: 0 6px 0 4px; border: 1px solid #000; background: #9b9b9b; color: #111; box-shadow: 1px 1px 0 #555; }
  .ucs { position: absolute; left: 6px; bottom: 0; width: 72px; height: 75px; fill: none; stroke: #e8e8e8; }
  .scroll { display: flex; flex-direction: column; justify-content: space-between; align-items: center; width: 18px; background: #f2f2f2; position: relative; }
  .scroll button { height: 17px; width: 17px; display: grid; place-items: center; }
  .scroll svg { width: 8px; height: 6px; fill: none; stroke: #333; stroke-width: 2; }
  .thumb { position: absolute; left: 1px; top: 28%; width: 14px; height: 16px; background: #cdcdcd; }`, `
  <div class="view"><svg class="plan" aria-label="Drawing">
    <defs><pattern id="minor" patternUnits="userSpaceOnUse" x="72" y="-14" width="129" height="129"><path d="M26.500 0v129M52.500 0v129M78.500 0v129M104.500 0v129M0 26.500h129M0 52.500h129M0 78.500h129M0 104.500h129" stroke="#252d39"/><path d="M.5 0v129M0 .5h129" stroke="#303848"/></pattern></defs>
    <rect width="100%" height="100%" fill="url(#minor)"/>
    <g stroke="#fff" fill="none"><path d="M200.500 0v353" stroke="#ddd"/><path d="M208.500 0v900M0 316.500h3000M168.500 320.500h3000"/>
    <path d="M260.500 0v244.500h3000" stroke-dasharray="3 2"/><path d="M260.500 244.500L208.500 311" stroke="#aaa"/></g>
    <path d="M202.500 311.500h11v10h-11zM208.500 311v10M203 316.500h10M203 321l10-10" stroke="#00b400" fill="none"/></svg>
    <span class="label">[−][Top][2D Wireframe]</span><span class="tip">Endpoint</span>
    <svg class="ucs" viewBox="0 0 72 75"><path d="M6.500 15v47h47M2.500 66.500v-8h8v8zM8 1l6 6 6-6M14 7v6M58 49l12 12M70 49L58 61"/></svg>
    <view-cube></view-cube></div>
  <div class="scroll"><button type="button" aria-label="Scroll up"><svg viewBox="0 0 8 6"><path d="M1 5l3-4 3 4"/></svg></button><span class="thumb"></span>
  <button type="button" aria-label="Scroll down"><svg viewBox="0 0 8 6"><path d="M1 1l3 4 3-4"/></svg></button></div>`);

define('layout-tabs', `
  :host { display: flex; height: 22px; background: #676767; border-left: 2px solid #9a9a9a; padding-bottom: 5px; font-size: 10px; color: #111; }
  .bar { display: flex; flex: 1; background: #f0f0f0; border-top: 1px solid #888; border-bottom: 1px solid #fff; }
  .nav { display: flex; width: 58px; }
  .nav button { flex: 1; border-right: 1px solid #ccc; display: grid; place-items: center; }
  .nav svg { width: 8px; height: 8px; fill: #555; stroke: #555; }
  .tabs { display: flex; flex: 1; }
  .tabs button { position: relative; height: 15px; line-height: 15px; text-align: center; }
  .tabs svg { position: absolute; inset: 0; width: 100%; height: 100%; overflow: visible; }
  .tabs span { position: relative; }
  .m { width: 46px; color: #fff; z-index: 1; } .l { width: 50px; } .r { width: 53px; }
  .hs { display: flex; flex: 0 0 35%; justify-content: space-between; align-items: center; position: relative; padding: 0 16px 0 4px; }
  .hs button { width: 17px; display: grid; place-items: center; }
  .hs svg { width: 6px; height: 8px; fill: none; stroke: #333; stroke-width: 2; }
  .thumb { position: absolute; left: 48%; top: 1px; width: 16px; height: 13px; background: #cdcdcd; }`, `
  <div class="bar"><div class="nav">${['M1 0v8M7 0L3 4l4 4z', 'M6 0L2 4l4 4z', 'M2 0l4 4-4 4z', 'M7 0v8M1 0l4 4-4 4z'].map((d, i) => `<button type="button" aria-label="Tab scroll ${i + 1}"><svg viewBox="0 0 8 8"><path d="${d}"/></svg></button>`).join('')}</div>
  <div class="tabs"><button type="button" class="m"><svg viewBox="0 0 46 15"><path fill="#212830" d="M0 0h48l-5 15H6z"/></svg><span>Model</span></button>
  <button type="button" class="l"><svg viewBox="0 0 51 15"><path fill="#fff" stroke="#333" d="M3 0l-4 14h48l5-14"/></svg><span>Layout1</span></button>
  <button type="button" class="r"><svg viewBox="0 0 53 15"><path fill="#fff" stroke="#333" d="M1 0l-4 14h50l5-14"/></svg><span>Layout2</span></button></div>
  <div class="hs"><button type="button" aria-label="Scroll left"><svg viewBox="0 0 6 8"><path d="M5 1L1 4l4 3"/></svg></button><span class="thumb"></span>
  <button type="button" aria-label="Scroll right"><svg viewBox="0 0 6 8"><path d="M1 1l4 3-4 3"/></svg></button></div></div>`);

define('command-line', `
  :host { display: flex; height: 33px; background: #fff; align-items: center; font-family: "DejaVu Sans Mono", monospace; border-right: 1px solid #666; color: #000; }
  .side { display: flex; flex: 0 0 51px; height: 100%; align-items: center; gap: 5px; padding-left: 3px; background: linear-gradient(#777, #3c3c3c); }
  .grip { width: 6px; height: 16px; background: repeating-conic-gradient(#bbb 0 25%, transparent 0 50%) 0 0 / 2px 2px; opacity: .7; }
  .side button svg { display: block; width: 10px; height: 10px; stroke: #eee; stroke-width: 2; }
  .side app-icon { width: 14px; height: 14px; }
  .mv { margin-left: 4px; }
  i { border: 3px solid transparent; border-top: 4px solid #888; border-bottom: 0; margin-left: 1px; }
  label { display: flex; gap: 5px; margin-left: 6px; white-space: nowrap; }
  input { flex: 1; min-width: 0; height: 24px; border: 0; outline: 0; font: inherit; background: none; }`, `
  <div class="side"><span class="grip"></span><button type="button" aria-label="Close command line"><svg viewBox="0 0 10 10"><path d="M1 1l8 8M9 1L1 9"/></svg></button>
  <button type="button" aria-label="Customize"><app-icon name="wrench"></app-icon></button></div>
  <app-icon class="mv" name="move"></app-icon><i></i><label for="cmd"><b>MOVE</b><span>Specify second point or &lt;use first point as displacement&gt;:</span></label><input id="cmd" type="text">`);

define('status-bar', `
  :host { display: flex; height: 21px; background: linear-gradient(#858585, #707070); border-top: 1px solid #222; color: #111; font-size: 10px; }
  .xy { flex: 0 0 157px; padding-left: 11px; line-height: 23px; background: linear-gradient(#a5a5a5, #858585); border-right: 1px solid #444; font-size: 10px; }
  button { flex: none; height: 20px; display: flex; align-items: center; justify-content: center; gap: 2px; background: linear-gradient(#b9b9b9, #9e9e9e); border-right: 1px solid #555; border-left: 1px solid #ccc; }
  .modes { display: flex; flex: 0 0 309px; } .modes button { flex: 1 1 0; min-width: 0; }
  .modes button.on { background: linear-gradient(#d5eef5, #cdeaf3 48%, #8fc5d8 50%, #b5e2ee); }
  .right { display: flex; margin-left: auto; }
  .model { width: 42px; } .b { width: 20px; } .sc { width: 49px; }
  .gap { width: 11px; background: #666; } .gap.n { width: 6px; }
  .tray { display: flex; width: 46px; justify-content: space-around; align-items: center; border: 1px solid #555; background: #a5a5a5; margin: 0 1px; }
  i { border: 4px solid transparent; border-top: 5px solid #111; border-bottom: 0; }
  .dd { width: 13px; } .cl { width: 22px; }`, `
  <span class="xy">6700.15, 14138.60, 0.00</span>
  <div class="modes">${'+infer +snap +grid ortho polar +osnap +3d +track +ducs +dyn lwt +tpy qp sc am'.split(' ').map(s => { const n = s.replace('+', ''); return `<button type="button" class="${s[0] === '+' ? 'on' : ''}" aria-label="${n}"><app-icon name="s_${n}"></app-icon></button>`; }).join('')}</div>
  <div class="right"><button class="model" type="button">MODEL</button><button class="b" type="button" aria-label="Layout"><app-icon name="layoutm"></app-icon></button>
  <button class="b" type="button" aria-label="Quick view"><app-icon name="layouts"></app-icon></button><span class="gap"></span>
  <button class="sc" type="button"><app-icon name="annot" style="width:13px"></app-icon><span>1:1</span><i></i></button>
  <button class="b" type="button" aria-label="Annotation visibility"><app-icon name="annovis"></app-icon></button>
  <button class="b" type="button" aria-label="Auto scale"><app-icon name="annot" style="opacity:.5"></app-icon></button><span class="gap n"></span>
  <button class="b" type="button" aria-label="Workspace"><app-icon name="gear"></app-icon></button><button class="b" type="button" aria-label="Unlock"><app-icon name="unlock"></app-icon></button>
  <button class="b" type="button" aria-label="Hardware"><app-icon name="hardware" style="opacity:.7"></app-icon></button>
  <span class="tray"><app-icon name="tray1"></app-icon><app-icon name="bulb"></app-icon></span>
  <button class="dd" type="button" aria-label="Status menu"><i></i></button><button class="cl" type="button" aria-label="Clean screen"><app-icon name="clean"></app-icon></button></div>`);

define('task-bar', `
  :host { display: flex; height: 38px; color: #fff; font-size: 11px;
    background: linear-gradient(90deg, transparent 0 16px, #5e574c88 25px, #7b746855 34px, transparent 48px 404px, #7d7568 405px, #7d7568 407px, transparent 408px calc(100% - 34px), #5b543f99 calc(100% - 17px), transparent), linear-gradient(#afa796, #9f9788); }
  .app { width: 54px; margin-right: 4px; height: 37px; display: grid; place-items: center; }
  .open { border: 1px solid #cbc4b6; background: #ffffff18; } .act { border-color: #eee; background: #ffffff40; }
  .start { width: 48px; margin: 0; } .ie { width: 55px; }
  svg { display: block; width: 30px; height: 30px; }
  .start svg { width: 26px; }
  .tray { margin-left: auto; display: flex; align-items: center; padding-right: 15px; }
  .tray i { border: 4px solid transparent; border-bottom: 5px solid #fff; border-top: 0; margin-right: 15px; }
  .tray app-icon { margin-right: 4px; } .tray span { margin: 0 12px 0 8px; }
  time { text-align: center; line-height: 16px; text-shadow: 0 1px 2px #554; padding-top: 2px; }`, `
  <button class="app start" type="button" aria-label="Start"><svg viewBox="0 0 26 30" fill="#fff"><path d="M1 6l10-1.500v10H1zM12 4l14-2v12.500H12zM1 15.500h10V26L1 24.500zM12 15.500h14V28l-14-2z"/></svg></button>
  <button class="app ie" type="button" aria-label="Internet Explorer"><svg viewBox="0 0 30 30"><path d="M25 17H10q1 5 5 5 4 0 5-2h5q-3 7-10 7-10-1-10-11Q6 6 15 5q10 1 10 12zM10 13h10q-1-4-5-4t-5 4z" fill="#39b7ee" stroke="#1c86c6"/><path d="M2 27Q-1 19 12 8 27-3 28 4q0 3-3 6 2-6-2-6-4 0-11 7Q1 23 5 26z" fill="#f5c62f" stroke="#c9921a" stroke-width=".5"/></svg></button>
  <button class="app open" type="button" aria-label="File Explorer"><svg viewBox="0 0 30 30"><path d="M1 3h9l2 2h8l1 3h8v19H1z" fill="#e8cb6a" stroke="#b8983a"/><path d="M1 8h28v19H1z" fill="#f7e49a"/><path d="M3 3.500h4" stroke="#2c2" stroke-width="2"/><path d="M12 5h4" stroke="#d33" stroke-width="2"/><path d="M21 8h4" stroke="#38d" stroke-width="2"/><path d="M5 29v-9q0-3 3-3h14q3 0 3 3v9h-4v-6H9v6z" fill="#8dd0f0" stroke="#3f9bcb"/></svg></button>
  <button class="app open" type="button" aria-label="Chrome"><svg viewBox="0 0 30 30"><circle cx="15" cy="15" r="13" fill="#fcc81e"/><path d="M15 2A13 13 0 0 1 26.300 8.500H15A6.500 6.500 0 0 0 9 12L3.700 8.500A13 13 0 0 1 15 2z" fill="#dc3d2d"/><path d="M3.700 8.500L9.500 18.500 15 21.500 13 28A13 13 0 0 1 3.700 8.500z" fill="#3daa48"/><circle cx="15" cy="15" r="6" fill="#fff"/><circle cx="15" cy="15" r="5" fill="#3d7fd6"/></svg></button>
  <button class="app open act" type="button" aria-label="AutoCAD"><svg viewBox="0 0 30 30"><defs><linearGradient id="r" x2="1" y2="1"><stop stop-color="#d8322c"/><stop offset=".5" stop-color="#f0a8a0"/><stop offset="1" stop-color="#e02822"/></linearGradient></defs><path d="M0 0h30v30H0z" fill="url(#r)"/><path d="M13 5h4l7 15-4 3-2-3h-6l-2 3-4-3z" fill="#b3170f"/><path d="M15 5h2l7 15-4 3-5-8z" fill="#5a0a08"/></svg></button>
  <div class="tray"><i></i><app-icon name="battery"></app-icon><app-icon name="signal"></app-icon><span>ENG</span><time>12:33 PM<br>1/18/2015</time></div>`);

define('cad-app', `
  :host { position: relative; display: flex; flex-direction: column; height: 100vh; }
  tool-rows, title-bar, menu-bar, doc-tabs, layout-tabs, command-line, status-bar, task-bar { flex: none; }`,
  `<title-bar></title-bar><menu-bar></menu-bar><app-button></app-button><doc-tabs></doc-tabs><tool-rows></tool-rows>
  <drawing-area></drawing-area><layout-tabs></layout-tabs><command-line></command-line><status-bar></status-bar><task-bar></task-bar>`);
</script>
</body>
</html>
